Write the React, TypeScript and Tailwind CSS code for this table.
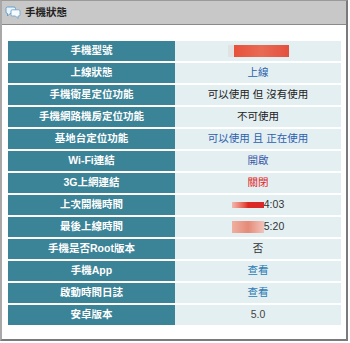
const rows: { label: string; value: React.ReactNode }[] = [
  {
    label: "手機型號",
    value: (
      <span className="flex items-center">
        <span className="w-[6px] h-[12px] bg-[#e2e2e2]" />
        <span className="w-[55px] h-[12px] bg-gradient-to-r from-[#e8503a] via-[#e86a55] to-[#e4503e]" />
      </span>
    ),
  },
  { label: "上線狀態", value: <span className="text-[#2d5fae]">上線</span> },
  { label: "手機衛星定位功能", value: <span className="text-[#222]">可以使用 但 沒有使用</span> },
  { label: "手機網路機房定位功能", value: <span className="text-[#222]">不可使用</span> },
  { label: "基地台定位功能", value: <span className="text-[#2d5fae]">可以使用 且 正在使用</span> },
  { label: "Wi-Fi連結", value: <span className="text-[#3a5aa8]">開啟</span> },
  { label: "3G上網連結", value: <span className="text-[#e02424]">關閉</span> },
  {
    label: "上次開機時間",
    value: (
      <span className="flex items-center text-[#333]">
        <span className="w-[32px] h-[6px] bg-gradient-to-r from-[#f0b8b0] via-[#dc2a22] to-[#d8282a]" />
        4:03
      </span>
    ),
  },
  {
    label: "最後上線時間",
    value: (
      <span className="flex items-center text-[#333]">
        <span className="w-[32px] h-[12px] bg-gradient-to-r from-[#efb0a0] via-[#e58a78] to-[#f0c4bc]" />
        5:20
      </span>
    ),
  },
  { label: "手機是否Root版本", value: <span className="text-[#333]">否</span> },
  { label: "手機App", value: <span className="text-[#2f7db5]">查看</span> },
  { label: "啟動時間日誌", value: <span className="text-[#2f7db5]">查看</span> },
  { label: "安卓版本", value: <span className="text-[#444]">5.0</span> },
];

const BubbleIcon = () => (
  <svg width="16" height="14" viewBox="0 0 16 14">
    <path d="M1 2.5 Q1 1 2.5 1 H9 Q10.5 1 10.5 2.5 V6 Q10.5 7.5 9 7.5 H5 L2.5 10 V7.5 Q1 7.5 1 6 Z" fill="#eaf4fb" stroke="#6a9fc8" strokeWidth="1" />
    <path d="M6 5 Q6 3.8 7.3 3.8 H13.7 Q15 3.8 15 5 V8.8 Q15 10 13.7 10 H13 V12.5 L10.5 10 H7.3 Q6 10 6 8.8 Z" fill="#f7fbfe" stroke="#7aaad0" strokeWidth="1" />
  </svg>
);

export default function App() {
  return (
    <div
      className="w-[350px] h-[343px] bg-white"
      style={{ fontFamily: '"Liberation Sans", "Noto Sans CJK TC", sans-serif' }}
    >
      <div className="w-[348px] h-[341px] border-l-2 border-t border-b-2 border-r-2 border-l-[#a8a8a8] border-t-[#9a9a9a] border-r-[#7a7a7a] border-b-[#7a7a7a] flex flex-col">
        <div className="h-[24px] bg-[#c8c8c8] border-b border-[#8a8a8a] flex items-center gap-[4px] pl-[3px]">
          <BubbleIcon />
          <span className="text-[10.5px] font-bold text-[#222]">手機狀態</span>
        </div>
        <div className="pl-[6px] pt-[16px]">
          <div className="w-[333px] flex flex-col gap-[2px]">
            {rows.map((r) => (
              <div key={r.label} className="flex h-[20px] text-[10.5px]">
                <div className="w-[167px] bg-[#3b8397] text-white font-bold flex items-center justify-center">
                  {r.label}
                </div>
                <div className="flex-1 bg-[#e4eff2] flex items-center justify-center">
                  {r.value}
                </div>
              </div>
            ))}
          </div>
        </div>
      </div>
    </div>
  );
}
